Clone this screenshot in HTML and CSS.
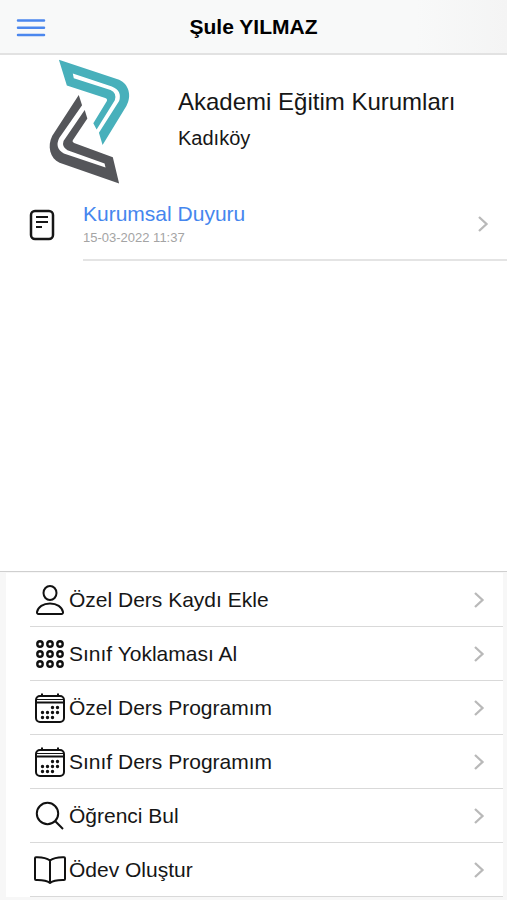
FILE: index.html
```html
<!DOCTYPE html>
<html lang="tr">
<head>
<meta charset="utf-8">
<meta name="viewport" content="width=device-width, initial-scale=1">
<title>Şule YILMAZ</title>
<link rel="stylesheet" href="styles.css">
</head>
<body>
<svg class="defs" aria-hidden="true">
  <symbol id="chevron" viewBox="0 0 12 18"><path d="M2 2l7.500 7L2 16" fill="none" stroke="currentColor" stroke-width="2.300"/></symbol>
  <symbol id="calendar" viewBox="0 0 32 32">
    <g fill="none" stroke="currentColor" stroke-width="2"><rect x="2" y="4" width="28" height="26" rx="4"/><path d="M2 7.500h28" stroke-width="1"/><path d="M2 10.500h28M8 1.500V5M24 1.500V5"/></g>
    <path d="M18.500 15.500h0M23.500 15.500h0M8.500 20.500h0M13.500 20.500h0M18.500 20.500h0M23.500 20.500h0M8.500 25.500h0M13.500 25.500h0M18.500 25.500h0" fill="none" stroke="currentColor" stroke-width="3.400" stroke-linecap="round"/>
  </symbol>
</svg>
<header class="toolbar">
  <button class="menu-button" type="button" aria-label="Menü">
    <svg viewBox="0 0 30 20"><path d="M2 2.500h26M2 9.700h26M2 16.900h26" stroke="currentColor" stroke-width="2.500" stroke-linecap="round"/></svg>
  </button>
  <h1 class="title">Şule YILMAZ</h1>
</header>
<main class="content">
  <section class="school">
    <svg class="logo" viewBox="0 0 300 405" aria-hidden="true">
      <path fill="#48b0bb" d="M56 14L238 75C268 88 277 125 260 154L188 272L177 235L238 139Q248 108 216 95L98 56L101 70L212 106Q232 115 225 137L170 225L160 206L201 139Q203 132 196 130L80 92Z"/>
      <path fill="#55565a" d="M116 121L36 244C20 275 29 312 58 326L238 388L219 309L102 266Q95 263 98 258L142 192L134 166L70 260Q64 278 82 288L194 328L197 340L71 298Q42 281 57 251L126 152Z"/>
    </svg>
    <div class="school-text">
      <h2 class="school-name">Akademi Eğitim Kurumları</h2>
      <p class="branch">Kadıköy</p>
    </div>
  </section>
  <a class="notice" href="#">
    <svg class="notice-icon" viewBox="0 0 26 32"><g fill="none" stroke="currentColor" stroke-width="2.500"><rect x="2" y="2" width="22" height="28" rx="4"/><path d="M7 8h12M7 13h12M7 18h6" stroke-width="2.200"/></g></svg>
    <span class="notice-body">
      <span class="notice-text"><span class="notice-title">Kurumsal Duyuru</span><span class="notice-date">15-03-2022 11:37</span></span>
      <svg class="chevron"><use href="#chevron"/></svg>
    </span>
  </a>
</main>
<footer class="actions">
  <nav class="action-list">
    <a class="action" href="#"><svg class="icon" viewBox="0 0 32 32"><g fill="none" stroke="currentColor" stroke-width="2"><ellipse cx="16" cy="9" rx="6.500" ry="7"/><path d="M16 19.500C9 19.500 4 23 3 28c-.2 1.200.5 2 1.500 2h23c1 0 1.700-.8 1.500-2-1-5-6-8.500-13-8.500z"/></g></svg>Özel Ders Kaydı Ekle<svg class="chevron"><use href="#chevron"/></svg></a>
    <a class="action" href="#"><svg class="icon" viewBox="0 0 32 32"><g fill="none" stroke="currentColor" stroke-width="2.400"><circle cx="6" cy="6" r="2.700"/><circle cx="16" cy="6" r="2.700"/><circle cx="26" cy="6" r="2.700"/><circle cx="6" cy="16" r="2.700"/><circle cx="16" cy="16" r="2.700"/><circle cx="26" cy="16" r="2.700"/><circle cx="6" cy="26" r="2.700"/><circle cx="16" cy="26" r="2.700"/><circle cx="26" cy="26" r="2.700"/></g></svg>Sınıf Yoklaması Al<svg class="chevron"><use href="#chevron"/></svg></a>
    <a class="action" href="#"><svg class="icon"><use href="#calendar"/></svg>Özel Ders Programım<svg class="chevron"><use href="#chevron"/></svg></a>
    <a class="action" href="#"><svg class="icon"><use href="#calendar"/></svg>Sınıf Ders Programım<svg class="chevron"><use href="#chevron"/></svg></a>
    <a class="action" href="#"><svg class="icon" viewBox="0 0 32 32"><g fill="none" stroke="currentColor" stroke-width="2"><circle cx="13.500" cy="13.500" r="10.700"/><path d="M21.300 21.300L29 29"/></g></svg>Öğrenci Bul<svg class="chevron"><use href="#chevron"/></svg></a>
    <a class="action" href="#"><svg class="icon" viewBox="0 0 32 32"><path d="M16 6.500C12.500 3.800 7.500 3 2 3.200Q1 3.300 1 4.300V25Q1 26 2 26c6-.2 10.500.3 14 3 3.500-2.700 8-3.200 14-3q1 0 1-1V4.300q0-1-1-1.100C24.500 3 19.500 3.800 16 6.500zM16 6.500V29" fill="none" stroke="currentColor" stroke-width="2" stroke-linejoin="round"/></svg>Ödev Oluştur<svg class="chevron"><use href="#chevron"/></svg></a>
  </nav>
</footer>
</body>
</html>
```
FILE: styles.css
```css
* {
  box-sizing: border-box;
}

body {
  margin: 0;
  min-height: 100vh;
  display: flex;
  flex-direction: column;
  background: #fff;
  color: #161616;
  font-family: "Liberation Sans", Arial, sans-serif;
}

h1, h2, p {
  margin: 0;
  font-weight: 400;
}

a {
  color: inherit;
  text-decoration: none;
}

svg {
  flex: none;
}

.defs {
  position: absolute;
  width: 0;
  height: 0;
}

.toolbar {
  display: grid;
  grid-template-columns: 48px 1fr 48px;
  align-items: center;
  height: 55px;
  background: linear-gradient(to right, #f8f9f9 82%, #f4f4f4);
  border-bottom: 2px solid #e2e2e2;
}

.menu-button {
  display: flex;
  margin: 2px 0 0 16px;
  padding: 0;
  border: 0;
  background: none;
  color: #4b87ee;
}

.menu-button svg {
  width: 30px;
  height: 20px;
}

.title {
  color: #000;
  font-size: 21px;
  line-height: 24px;
  font-weight: 700;
  text-align: center;
}

.content {
  flex: 1;
}

.school {
  display: flex;
  gap: 38px;
  padding-left: 40px;
}

.logo {
  width: 100px;
  height: 134px;
}

.school-text {
  padding-top: 31px;
}

.school-name {
  font-size: 24px;
  line-height: 32px;
}

.branch {
  margin-top: 8px;
  font-size: 20px;
  line-height: 24px;
}

.notice {
  display: flex;
  align-items: center;
  gap: 28px;
  padding-left: 29px;
}

.notice-icon {
  width: 26px;
  height: 32px;
}

.notice-body {
  flex: 1;
  display: flex;
  align-items: center;
  justify-content: space-between;
  height: 72px;
  padding-right: 18px;
  border-bottom: 2px solid #e4e4e4;
}

.notice-text {
  display: flex;
  flex-direction: column;
  gap: 4px;
}

.notice-title {
  color: #4586ee;
  font-size: 21px;
  line-height: 24px;
}

.notice-date {
  color: #a4a4a4;
  font-size: 13px;
  line-height: 16px;
}

.chevron {
  width: 12px;
  height: 18px;
  color: #b9b9b9;
}

.actions {
  padding: 1px 4px 3px 6px;
  background: #f7f7f7;
  border-top: 1px solid #cfcfcf;
}

.action-list {
  padding-left: 24px;
  background: #fff;
}

.action {
  display: flex;
  align-items: center;
  gap: 3px;
  height: 54px;
  padding: 0 18px 0 4px;
  border-bottom: 1px solid #d9d9d9;
  font-size: 21px;
  line-height: 24px;
}

.action .chevron {
  margin-left: auto;
}

.icon {
  width: 32px;
  height: 32px;
  color: #111;
}
```
